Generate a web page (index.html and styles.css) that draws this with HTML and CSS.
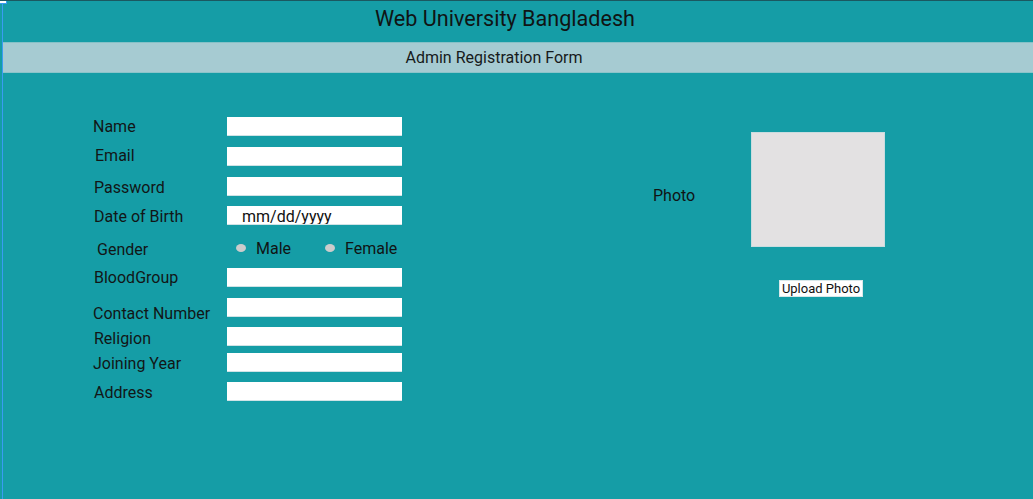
FILE: index.html
```html
<!DOCTYPE html>
<html lang="en">
<head>
<meta charset="utf-8">
<title>Admin Registration Form</title>
<link rel="stylesheet" href="styles.css">
</head>
<body>
<div class="corner"></div>
<div class="page">
  <header class="header">
    <h1 class="title">Web University Bangladesh</h1>
  </header>
  <div class="band">
    <h2 class="subtitle">Admin Registration Form</h2>
  </div>
  <main class="main">
    <form class="form">
      <label class="lbl lbl-up">Name</label>
      <input class="field" type="text">
      <label class="lbl lbl-r2">Email</label>
      <input class="field" type="email">
      <label class="lbl lbl-r1">Password</label>
      <input class="field" type="password">
      <label class="lbl lbl-r1">Date of Birth</label>
      <input class="field field-date" type="text" value="mm/dd/yyyy">
      <span class="lbl lbl-gender">Gender</span>
      <div class="radios">
        <label class="radio"><input type="radio" name="g"><span>Male</span></label>
        <label class="radio"><input type="radio" name="g"><span>Female</span></label>
      </div>
      <label class="lbl lbl-r1 lbl-up">BloodGroup</label>
      <input class="field" type="text">
      <label class="lbl lbl-low">Contact Number</label>
      <input class="field" type="text">
      <label class="lbl lbl-r1 lbl-down">Religion</label>
      <input class="field" type="text">
      <label class="lbl">Joining Year</label>
      <input class="field" type="text">
      <label class="lbl lbl-r1">Address</label>
      <input class="field" type="text">
    </form>
    <section class="photo">
      <span class="photo-label">Photo</span>
      <div class="photo-col">
        <div class="photo-box"></div>
        <button class="upload" type="button">Upload Photo</button>
      </div>
    </section>
  </main>
</div>
</body>
</html>
```
FILE: styles.css
```css
html, body {
  margin: 0;
  padding: 0;
  background: #159da6;
  height: 100%;
}
body {
  font-family: Roboto, "Liberation Sans", sans-serif;
  color: #101414;
  border-top: 1px solid #1b5860;
  box-sizing: border-box;
  position: relative;
}
.corner {
  position: absolute;
  left: 0;
  top: -1px;
  width: 6px;
  height: 3px;
  background: #ffffff;
  border-right: 1px solid #3a9cf2;
  border-bottom: 1px solid #3a9cf2;
}
.page {
  margin-left: 2px;
  border-left: 1px solid #3a9cf2;
  min-height: 498px;
  box-sizing: border-box;
}
.header {
  height: 41px;
  display: flex;
  align-items: center;
  justify-content: center;
  padding-right: 26px;
}
.title {
  margin: 0;
  font-weight: 400;
  font-size: 21.6px;
  line-height: 24px;
  margin-top: -6px;
}
.band {
  height: 29px;
  background: #a6cbd2;
  border-top: 1px solid #86c1c7;
  border-bottom: 1px solid #8cc4ca;
  display: flex;
  align-items: center;
  justify-content: center;
  padding-right: 48px;
}
.subtitle {
  margin: 0;
  font-weight: 400;
  font-size: 16px;
  line-height: 18px;
  color: #161a1b;
}
.main {
  display: flex;
  align-items: flex-start;
  padding: 44px 0 0 90px;
  gap: 251px;
}
.form {
  display: grid;
  grid-template-columns: 134px 175px;
  grid-template-rows: 30px 30px 29px 32px 30px 30px 29px 26px 29px 20px;
}
.lbl {
  font-size: 16px;
  line-height: 21px;
  color: #121616;
  white-space: nowrap;
}
.lbl-r1 { padding-left: 1px; }
.lbl-r2 { padding-left: 2px; margin-top: -2px; }
.lbl-up { margin-top: -1px; }
.lbl-down { margin-top: 1px; }
.lbl-low { margin-top: 5px; }
.lbl-gender { padding-left: 4px; margin-top: 1px; }
.field {
  width: 175px;
  height: 19px;
  box-sizing: border-box;
  border: none;
  border-bottom: 1px solid #cfe3e6;
  background: #ffffff;
  margin: 0;
  padding: 0;
  font-family: Roboto, "Liberation Sans", sans-serif;
  font-size: 16px;
  color: #111;
  outline: none;
}
.field-date {
  padding-left: 15px;
  padding-top: 2px;
}
.radios {
  display: flex;
  align-items: center;
  height: 20px;
  padding-left: 9px;
  gap: 34px;
}
.radio {
  display: flex;
  align-items: center;
  gap: 10px;
  font-size: 16px;
  line-height: 19px;
}
.radio input {
  appearance: none;
  -webkit-appearance: none;
  margin: 0;
  width: 10px;
  height: 8px;
  border-radius: 50%;
  background: #cccccc;
}
.photo {
  display: flex;
  align-items: flex-start;
  margin-top: 15px;
}
.photo-label {
  width: 98px;
  font-size: 16px;
  line-height: 21px;
  margin-top: 53px;
}
.photo-col {
  display: flex;
  flex-direction: column;
  align-items: center;
  width: 134px;
}
.photo-box {
  width: 134px;
  height: 115px;
  box-sizing: border-box;
  background: #e3e1e2;
  border: 1px solid #c9dcdf;
}
.upload {
  margin-top: 33px;
  margin-left: 6px;
  height: 17px;
  padding: 0 2px;
  background: #ffffff;
  border: 1px solid #d8e8ea;
  font-family: Roboto, "Liberation Sans", sans-serif;
  font-size: 13px;
  line-height: 15px;
  color: #111;
}
```
